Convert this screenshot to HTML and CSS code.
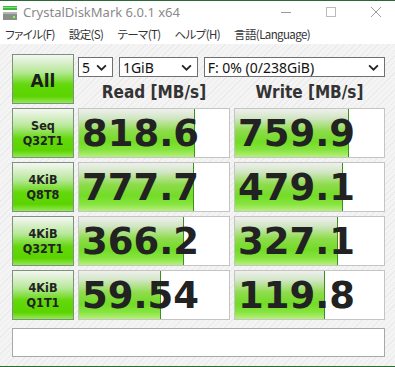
FILE: index.html
```html
<html>
<head>
    <link rel="stylesheet" href="styles.css">
</head>
<body>
<div id="window">
    <div id="titlebar">
        <svg class="appicon" width="16" height="16" viewBox="0 0 16 16">
            <rect x="1" y="1" width="14" height="4" fill="#3db83d"/>
            <rect x="1" y="2" width="14" height="1" fill="#7fe07f"/>
            <rect x="1" y="7" width="14" height="8" fill="#8a8f8a"/>
            <rect x="1" y="7" width="14" height="2" fill="#b4b8b4"/>
            <rect x="11" y="11" width="2" height="2" fill="#7dff4a"/>
        </svg>
        <span class="title">CrystalDiskMark 6.0.1 x64</span>
        <div class="winbtns">
            <svg width="10" height="10" viewBox="0 0 10 10"><path d="M0 5.5h10" stroke="#999" stroke-width="1"/></svg>
            <svg width="10" height="10" viewBox="0 0 10 10"><rect x="0.5" y="0.5" width="9" height="9" fill="none" stroke="#bbb"/></svg>
            <svg width="10" height="10" viewBox="0 0 10 10"><path d="M0 0L10 10M10 0L0 10" stroke="#999" stroke-width="1"/></svg>
        </div>
    </div>
    <div id="menubar">
        <span>ファイル(F)</span>
        <span>設定(S)</span>
        <span>テーマ(T)</span>
        <span>ヘルプ(H)</span>
        <span>言語(Language)</span>
    </div>
    <div id="client">
        <div class="grid">
            <div class="btn all">All</div>
            <div class="controls">
                <div class="selects">
                    <div class="combo c-count">5<svg viewBox="0 0 10 6"><path d="M1 1l4 4 4-4" fill="none" stroke="#222" stroke-width="1.6"/></svg></div>
                    <div class="combo c-size">1GiB<svg viewBox="0 0 10 6"><path d="M1 1l4 4 4-4" fill="none" stroke="#222" stroke-width="1.6"/></svg></div>
                    <div class="combo c-drive">F: 0% (0/238GiB)<svg viewBox="0 0 10 6"><path d="M1 1l4 4 4-4" fill="none" stroke="#222" stroke-width="1.6"/></svg></div>
                </div>
                <div class="heads">
                    <div class="head">Read [MB/s]</div>
                    <div class="head">Write [MB/s]</div>
                </div>
            </div>

            <div class="btn label">Seq<br>Q32T1</div>
            <div class="cell"><div class="bar" style="width:77.3%"></div><span class="num">818.6</span></div>
            <div class="cell"><div class="bar" style="width:76.7%"></div><span class="num">759.9</span></div>

            <div class="btn label">4KiB<br>Q8T8</div>
            <div class="cell"><div class="bar" style="width:76.7%"></div><span class="num">777.7</span></div>
            <div class="cell"><div class="bar" style="width:72.7%"></div><span class="num">479.1</span></div>

            <div class="btn label">4KiB<br>Q32T1</div>
            <div class="cell"><div class="bar" style="width:70%"></div><span class="num">366.2</span></div>
            <div class="cell"><div class="bar" style="width:69.3%"></div><span class="num">327.1</span></div>

            <div class="btn label">4KiB<br>Q1T1</div>
            <div class="cell"><div class="bar" style="width:54.7%"></div><span class="num">59.54</span></div>
            <div class="cell"><div class="bar" style="width:60.7%"></div><span class="num">119.8</span></div>
        </div>
        <div class="comment"></div>
    </div>
</div>
</body>
</html>
```
FILE: styles.css
```css
body {
    margin: 0;
    background: #fff;
}
#window {
    width: 395px;
    height: 365px;
    border-top: 1px solid #2a6b35;
    border-bottom: 1px solid #2a6b35;
    display: flex;
    flex-direction: column;
    overflow: hidden;
}
#titlebar {
    height: 22px;
    display: flex;
    align-items: center;
    background: #fff;
}
.appicon {
    margin: 2px 5px 0 2px;
}
.title {
    font-family: "Noto Sans", sans-serif;
    font-size: 13px;
    color: #8a8a8a;
}
.winbtns {
    margin-left: auto;
    display: flex;
    gap: 35px;
    padding-right: 14px;
}
#menubar {
    height: 21px;
    display: flex;
    align-items: center;
    gap: 14px;
    padding-left: 5px;
    background: #fff;
    font-family: "Noto Sans CJK JP", sans-serif;
    font-feature-settings: "palt";
    font-size: 11.5px;
    letter-spacing: -0.6px;
    color: #333;
}
#client {
    flex: 1;
    padding: 10px 10px 0 12px;
    background: repeating-linear-gradient(135deg, #f4f4f4 0, #f4f4f4 3px, #ebebeb 3px, #ebebeb 4px);
}
.grid {
    display: grid;
    grid-template-columns: 62px 152px 151px;
    grid-auto-rows: 50px;
    gap: 4px;
}
.btn {
    box-sizing: border-box;
    border: 1px solid #7d927d;
    background: linear-gradient(#f5f6f4 0%, #b8e89a 35%, #62d80a 62%, #5cd400 86%, #94e858 100%);
    display: flex;
    align-items: center;
    justify-content: center;
    text-align: center;
    color: #1c1c1c;
}
.all {
    font-family: "DejaVu Sans", sans-serif;
    font-weight: bold;
    font-size: 17px;
    padding-top: 4px;
}
.label {
    font-family: "DejaVu Sans Condensed", "DejaVu Sans", sans-serif;
    font-weight: bold;
    font-size: 12.5px;
    line-height: 15px;
    color: #222;
}
.controls {
    grid-column: 2 / 4;
    display: flex;
    flex-direction: column;
}
.selects {
    display: flex;
    gap: 6px;
    margin-top: 3px;
}
.combo {
    box-sizing: border-box;
    height: 20px;
    border: 1px solid #707070;
    background: #fff;
    display: flex;
    align-items: center;
    padding-left: 3px;
    font-family: "Noto Sans", sans-serif;
    font-size: 14px;
    color: #111;
}
.combo svg {
    width: 11px;
    height: 7px;
    margin-left: auto;
    margin-right: 5px;
}
.c-count { width: 35px; }
.c-size { width: 79px; }
.c-drive { width: 182px; }
.heads {
    display: grid;
    grid-template-columns: 152px 151px;
    gap: 4px;
    flex: 1;
}
.head {
    display: flex;
    align-items: center;
    justify-content: center;
    padding-top: 3px;
    font-family: "DejaVu Sans Condensed", "DejaVu Sans", sans-serif;
    font-weight: bold;
    font-size: 17px;
    color: #333;
}
.cell {
    box-sizing: border-box;
    position: relative;
    border: 1px solid #c4c4c4;
    background: #fff;
    display: flex;
    align-items: center;
    padding-left: 3px;
}
.bar {
    position: absolute;
    left: 0;
    top: 0;
    bottom: 0;
    box-sizing: border-box;
    border-right: 1px solid #3d8f22;
    background: linear-gradient(#eef0ec 0%, #d4e6c8 18%, #8edc4c 45%, #72dc26 68%, #86e43e 85%, #b6f07e 100%);
}
.num {
    position: relative;
    font-family: "DejaVu Sans", sans-serif;
    font-weight: bold;
    font-size: 37px;
    color: #222;
    padding-top: 1px;
}
.comment {
    box-sizing: border-box;
    margin-top: 8px;
    height: 29px;
    border: 1px solid #a8a8a8;
    background: #fff;
}
```
